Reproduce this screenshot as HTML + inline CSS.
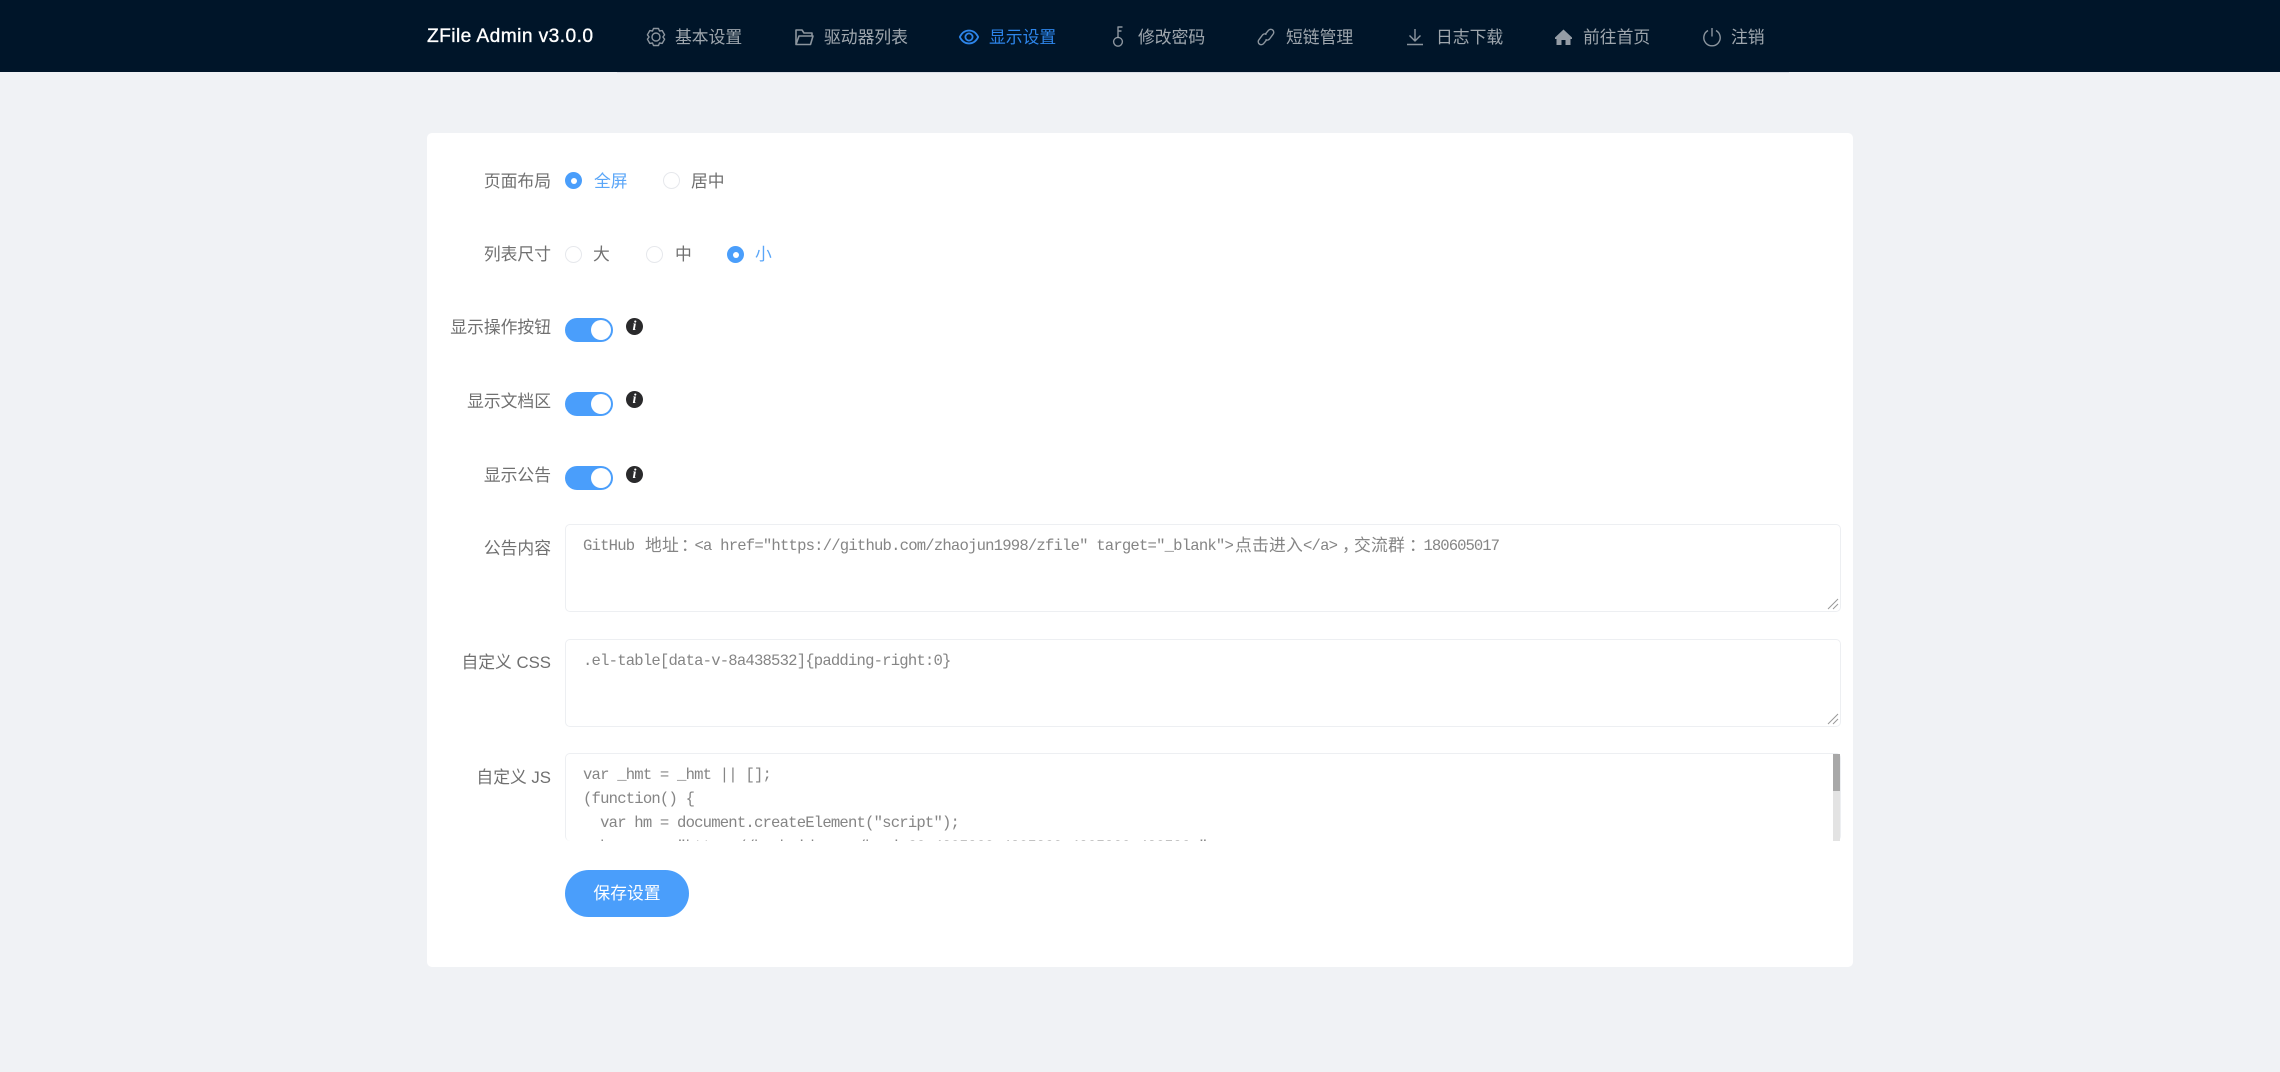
<!DOCTYPE html>
<html lang="zh-CN">
<head>
<meta charset="utf-8">
<title>ZFile Admin</title>
<style>
html,body{margin:0;padding:0;width:2280px;height:1072px;overflow:hidden;background:#f0f2f5;font-family:"Liberation Sans","Noto Sans CJK SC",sans-serif}
*{box-sizing:border-box}
.a{position:absolute}
.hdr{left:0;top:0;width:2280px;height:72px;background:#001529}
.hl{left:617px;top:72px;width:1172px;height:1px;background:#dcdfe6}
.brand{left:427px;top:22px;font-size:19.2px;letter-spacing:.42px;line-height:30px;color:#fff;-webkit-text-stroke:.35px #fff;white-space:nowrap}
.n{top:23px;font-size:16.8px;line-height:30px;color:rgba(255,255,255,.62);white-space:nowrap}
.n.on{color:#2d85ea}
.ic{top:26px;width:20px;height:22px;overflow:visible;fill:none;stroke:rgba(255,255,255,.55);stroke-width:1.4;stroke-linejoin:round}
.ic.on{stroke:#2d85ea}
.card{left:427px;top:133px;width:1426px;height:834px;background:#fff;border-radius:5px}
.l{right:1729px;font-size:16.8px;line-height:26px;color:#707070;white-space:nowrap;text-align:right}
.t{font-size:16.8px;line-height:26px;color:#707070;white-space:nowrap}
.t.on{color:#5aa6f8}
.r{width:17px;height:17px;border-radius:50%;border:1px solid #e6e8ec;background:#fff}
.r.on{background:#4a9efb;border:0}
.r.on:after{content:"";position:absolute;left:5.5px;top:5.5px;width:6px;height:6px;border-radius:50%;background:#fff}
.sw{left:565px;width:48px;height:24px;border-radius:12px;background:#4a9efb}
.sw:after{content:"";position:absolute;right:2px;top:2px;width:20px;height:20px;border-radius:50%;background:#fff}
.i{left:626px;width:17px;height:17px;border-radius:50%;background:#2a2a2c;color:#fff;font:italic bold 14px/17px "Liberation Serif",serif;text-align:center}
.ta{left:565px;width:1276px;height:88px;border:1px solid #edeff2;border-radius:5px;background:#fff;overflow:hidden}
.c{left:583px;font-family:"Liberation Mono",monospace;font-size:15.6px;letter-spacing:-.81px;line-height:24px;color:#858585;white-space:pre}
.z{font-family:"Noto Sans CJK SC",sans-serif;font-size:16.8px;letter-spacing:.2px;line-height:24px;color:#858585;white-space:pre;top:532px}
.rz{width:12px;height:12px;overflow:visible}
.btn{left:565px;top:870px;width:124px;height:47px;border-radius:24px;background:#4a9efb;color:#fff;font-size:16.8px;line-height:47px;text-align:center}
</style>
</head>
<body>
<div class="a hdr"></div>
<div class="a hl"></div>
<div class="a brand">ZFile Admin v3.0.0</div>

<svg class="a ic" style="left:646px" viewBox="0 0 20 22"><path d="M7.500 2.500h5l1 2.500 2.700-.4 2.400 4.200-1.700 2.200 1.700 2.200-2.400 4.200-2.700-.4-1 2.500h-5l-1-2.500-2.700.4-2.400-4.200 1.700-2.200-1.700-2.200 2.400-4.200 2.700.4z"/><circle cx="10" cy="11" r="4"/></svg>
<div class="a n" style="left:675px">基本设置</div>

<svg class="a ic" style="left:794px;stroke-width:1.600" viewBox="0 0 20 22"><path d="M2 18.500V4h6l2 3h8v3M2 18.500h14.500L19 10H5z"/></svg>
<div class="a n" style="left:824px">驱动器列表</div>

<svg class="a ic on" style="left:959px;stroke-width:1.800" viewBox="0 0 20 22"><path d="M.8 11C3 6.500 6.300 4.500 10 4.500s7 2 9.200 6.500c-2.200 4.500-5.500 6.500-9.200 6.500S3 15.500.8 11z"/><circle cx="10" cy="11" r="3.600"/></svg>
<div class="a n on" style="left:989px">显示设置</div>

<svg class="a ic" style="left:1108px" viewBox="0 0 20 22"><circle cx="10" cy="15.800" r="4.400"/><path d="M10 11.400V1h4.500M10 5h3.500"/></svg>
<div class="a n" style="left:1138px">修改密码</div>

<svg class="a ic" style="left:1256px" viewBox="0 0 20 22"><path d="M9 8.500l3.500-4.200a3 3 0 0 1 4.500 4L13.500 13a3 3 0 0 1-4 .5M11 13.500l-3.500 4.200a3 3 0 0 1-4.500-4L6.500 9a3 3 0 0 1 4-.5"/></svg>
<div class="a n" style="left:1286px">短链管理</div>

<svg class="a ic" style="left:1405px" viewBox="0 0 20 22"><path d="M10 3v12M4.500 9.500L10 15l5.500-5.500M2 18.500h16"/></svg>
<div class="a n" style="left:1436px">日志下载</div>

<svg class="a ic" style="left:1553px;stroke:none;fill:rgba(255,255,255,.58)" viewBox="0 0 20 22"><path d="M10.500 3.500L2 11.500v1.500h1.500V19h5v-5h4v5h5v-6H19v-1.500z"/></svg>
<div class="a n" style="left:1583px">前往首页</div>

<svg class="a ic" style="left:1702px" viewBox="0 0 20 22"><path d="M10 2v8.500M6 4.500a8.200 8.200 0 1 0 8 0"/></svg>
<div class="a n" style="left:1731px">注销</div>

<div class="a card"></div>

<div class="a l" style="top:169px">页面布局</div>
<div class="a r on" style="left:565px;top:172px"></div>
<div class="a t on" style="left:594px;top:169px">全屏</div>
<div class="a r" style="left:663px;top:172px"></div>
<div class="a t" style="left:691px;top:169px">居中</div>

<div class="a l" style="top:242px">列表尺寸</div>
<div class="a r" style="left:565px;top:246px"></div>
<div class="a t" style="left:593px;top:242px">大</div>
<div class="a r" style="left:646px;top:246px"></div>
<div class="a t" style="left:675px;top:242px">中</div>
<div class="a r on" style="left:727px;top:246px"></div>
<div class="a t on" style="left:755px;top:242px">小</div>

<div class="a l" style="top:315px">显示操作按钮</div>
<div class="a sw" style="top:318px"></div>
<div class="a i" style="top:318px">i</div>

<div class="a l" style="top:389px">显示文档区</div>
<div class="a sw" style="top:392px"></div>
<div class="a i" style="top:391px">i</div>

<div class="a l" style="top:463px">显示公告</div>
<div class="a sw" style="top:466px"></div>
<div class="a i" style="top:466px">i</div>

<div class="a l" style="top:536px">公告内容</div>
<div class="a ta" style="top:524px"></div>
<div class="a c" style="left:583px;top:534px">GitHub</div>
<div class="a z" style="left:645px">地址</div>
<div class="a z" style="left:681px">：</div>
<div class="a c" style="left:694.500px;top:534px">&lt;a href="https://github.com/zhaojun1998/zfile" target="_blank"&gt;</div>
<div class="a z" style="left:1235px">点击进入</div>
<div class="a c" style="left:1303px;top:534px">&lt;/a&gt;</div>
<div class="a z" style="left:1342px">，</div>
<div class="a z" style="left:1354px">交流群</div>
<div class="a z" style="left:1409px">：</div>
<div class="a c" style="left:1423.500px;top:534px;letter-spacing:-.96px">180605017</div>
<svg class="a rz" style="left:1827px;top:598px" viewBox="0 0 12 12"><path d="M1 11L11 1M6 11L11 6" stroke="#999" stroke-width="1"/></svg>

<div class="a l" style="top:650px">自定义 CSS</div>
<div class="a ta" style="top:639px"></div>
<div class="a c" style="top:649px">.el-table[data-v-8a438532]{padding-right:0}</div>
<svg class="a rz" style="left:1827px;top:713px" viewBox="0 0 12 12"><path d="M1 11L11 1M6 11L11 6" stroke="#999" stroke-width="1"/></svg>

<div class="a l" style="top:765px">自定义 JS</div>
<div class="a ta" style="top:753px;height:88px;border-bottom:0">
<div class="a c" style="left:17px;top:9px">var _hmt = _hmt || [];
(function() {
  var hm = document.createElement("script");
  hm.src = "https://hm.baidu.com/hm.js?8a4385328a4385328a4385328a438532a";
</div>
</div>
<div class="a" style="left:1833px;top:754px;width:7px;height:87px;background:#e3e3e3"></div>
<div class="a" style="left:1833px;top:754px;width:7px;height:37px;background:#a8a8a8"></div>

<div class="a btn">保存设置</div>
</body>
</html>
